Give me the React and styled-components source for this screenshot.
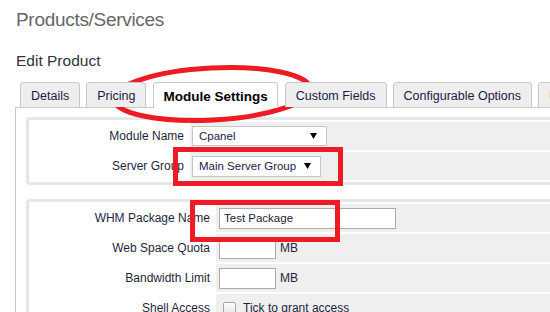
import React from "react";
import styled, { createGlobalStyle } from "styled-components";

const GlobalStyle = createGlobalStyle`
  html, body { margin: 0; padding: 0; background: #fff; overflow: hidden; }
  body { font-family: "Liberation Sans", Arial, sans-serif; }
`;

const Page = styled.div`
  position: relative;
  width: 550px;
  height: 312px;
  overflow: hidden;
  background: #fff;
`;

const Header = styled.div`
  padding-left: 16px;
`;

const Title = styled.h1`
  margin: 0;
  padding-top: 8px;
  font-size: 19px;
  line-height: 24px;
  letter-spacing: -0.3px;
  font-weight: normal;
  color: #666;
`;

const SubTitle = styled.h2`
  margin: 19px 0 0;
  font-size: 15.5px;
  line-height: 20px;
  font-weight: normal;
  color: #333;
`;

const TabBar = styled.div`
  position: relative;
  z-index: 1;
  display: flex;
  align-items: flex-start;
  gap: 6px;
  margin: 11px 0 -1px 20px;
  white-space: nowrap;
`;

const Tab = styled.div`
  box-sizing: border-box;
  flex: none;
  height: ${(p) => (p.$active ? 26 : 25)}px;
  padding: 2px ${(p) => (p.$active ? 9 : 10)}px 0;
  margin: 0 ${(p) => (p.$active ? 1 : 0)}px;
  display: flex;
  align-items: center;
  border: 1px solid #c8c8c8;
  border-bottom: none;
  border-radius: 4px 4px 0 0;
  background: ${(p) => (p.$active ? "#fff" : "#eeeeee")};
  color: ${(p) => (p.$active ? "#000" : "#1b1b45")};
  font-size: ${(p) => (p.$active ? 13.5 : 12.5)}px;
  font-weight: ${(p) => (p.$active ? "bold" : "normal")};
`;

const Panel = styled.div`
  margin-left: 15px;
  width: 1000px;
  height: 400px;
  border: 1px solid #c8c8c8;
  border-right: none;
  padding: 9px 0 0 10px;
  background: #fff;
`;

const Fieldset = styled.div`
  display: grid;
  grid-template-columns: ${(p) => p.$labelWidth}px 1fr;
  gap: 2px;
  padding: 2px;
  border: 3px solid #e3e7ea;
  border-radius: 4px;
  margin-bottom: 14px;
`;

const Label = styled.div`
  height: 28px;
  display: flex;
  align-items: center;
  justify-content: flex-end;
  padding-right: 4px;
  background: #fff;
  font-size: 12px;
  color: #1f1f3d;
  white-space: nowrap;
`;

const Field = styled.div`
  height: 28px;
  display: flex;
  align-items: center;
  gap: 4px;
  padding-left: ${(p) => p.$indent}px;
  background: #efefef;
  font-size: 12px;
  color: #1f1f3d;
  white-space: nowrap;
`;

const SelectBox = styled.div`
  box-sizing: border-box;
  width: ${(p) => p.$width}px;
  height: ${(p) => p.$height}px;
  display: flex;
  align-items: center;
  justify-content: space-between;
  padding: 0 9px 0 6px;
  border: 1px solid #c6c6c6;
  background: #fff;
  font-size: 11.5px;
  color: #22194a;
`;

const TextInput = styled.input`
  box-sizing: border-box;
  width: ${(p) => p.$width}px;
  height: 21px;
  margin: 0;
  padding: 0 4px;
  border: 1px solid #ababab;
  background: #fff;
  font-family: "Liberation Sans", Arial, sans-serif;
  font-size: 11.5px;
  color: #2a1a3a;
  outline: none;
`;

const Check = styled.span`
  box-sizing: border-box;
  width: 13px;
  height: 13px;
  margin: 0 3px 0 4px;
  border: 1px solid #a6a6a6;
  border-radius: 2px;
  background: linear-gradient(#ffffff, #e4e4e4);
`;

const Overlay = styled.svg`
  position: absolute;
  left: 0;
  top: 0;
  pointer-events: none;
`;

const Arrow = () => (
  <svg width="7" height="6" viewBox="0 0 7 6">
    <polygon points="0,0 7,0 3.5,6" fill="#000" />
  </svg>
);

const tabs = ["Details", "Pricing", "Module Settings", "Custom Fields", "Configurable Options", "Upgrades"];

export default function App() {
  return (
    <Page>
      <GlobalStyle />
      <Header>
        <Title>Products/Services</Title>
        <SubTitle>Edit Product</SubTitle>
      </Header>
      <TabBar>
        {tabs.map((t) => (
          <Tab key={t} $active={t === "Module Settings"}>
            {t}
          </Tab>
        ))}
      </TabBar>
      <Panel>
        <Fieldset $labelWidth={157}>
          <Label>Module Name</Label>
          <Field $indent={2}>
            <SelectBox $width={135} $height={20}>
              <span>Cpanel</span>
              <Arrow />
            </SelectBox>
          </Field>
          <Label>Server Group</Label>
          <Field $indent={2}>
            <SelectBox $width={129} $height={21}>
              <span>Main Server Group</span>
              <Arrow />
            </SelectBox>
          </Field>
        </Fieldset>
        <Fieldset $labelWidth={183}>
          <Label>WHM Package Name</Label>
          <Field $indent={3}>
            <TextInput $width={177} value="Test Package" readOnly />
          </Field>
          <Label>Web Space Quota</Label>
          <Field $indent={3}>
            <TextInput $width={57} value="" readOnly />
            MB
          </Field>
          <Label>Bandwidth Limit</Label>
          <Field $indent={3}>
            <TextInput $width={57} value="" readOnly />
            MB
          </Field>
          <Label>Shell Access</Label>
          <Field $indent={3}>
            <Check />
            Tick to grant access
          </Field>
        </Fieldset>
      </Panel>
      <Overlay width="550" height="312" viewBox="0 0 550 312">
        <ellipse
          cx="212"
          cy="94"
          rx="98.5"
          ry="26"
          fill="none"
          stroke="#ed1c24"
          strokeWidth="5"
          transform="rotate(-3 212 94)"
        />
        <rect x="175.5" y="149.5" width="165" height="34" fill="none" stroke="#ed1c24" strokeWidth="5" />
        <rect x="192.5" y="202.5" width="145" height="37" fill="none" stroke="#ed1c24" strokeWidth="5" />
      </Overlay>
    </Page>
  );
}
